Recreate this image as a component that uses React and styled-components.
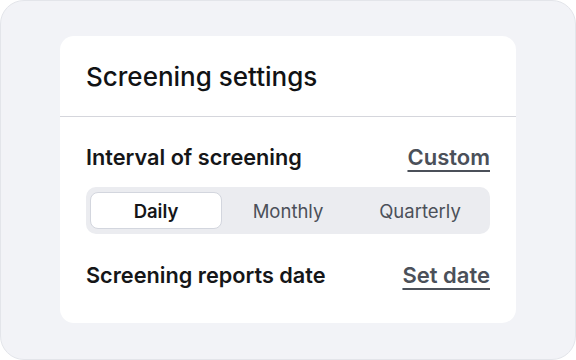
import React, { useState } from "react"
import styled, { createGlobalStyle } from "styled-components"

const GlobalStyle = createGlobalStyle`
  html, body {
    margin: 0;
    padding: 0;
    background: #ffffff;
  }
  body {
    font-family: Inter, "Noto Sans", sans-serif;
    -webkit-font-smoothing: antialiased;
  }
`

const options = ["Daily", "Monthly", "Quarterly"]

const App = () => {
  const [interval, setInterval] = useState("Daily")

  return (
    <>
      <GlobalStyle />
      <Frame>
        <Card>
          <Header>
            <Title>Screening settings</Title>
          </Header>
          <Body>
            <Row>
              <Label>Interval of screening</Label>
              <LinkButton>Custom</LinkButton>
            </Row>
            <Segmented>
              {options.map((opt) => (
                <Segment
                  key={opt}
                  $active={opt === interval}
                  onClick={() => setInterval(opt)}
                >
                  {opt}
                </Segment>
              ))}
            </Segmented>
            <Row $spaced>
              <Label>Screening reports date</Label>
              <LinkButton>Set date</LinkButton>
            </Row>
          </Body>
        </Card>
      </Frame>
    </>
  )
}

export default App

const Frame = styled.div`
  width: 576px;
  height: 360px;
  box-sizing: border-box;
  border: 1px solid #e3e5ea;
  border-radius: 24px;
  background: #f2f3f7;
  padding: 35px 59px 36px;
`

const Card = styled.div`
  background: #ffffff;
  border-radius: 14px;
  height: 100%;
  display: flex;
  flex-direction: column;
`

const Header = styled.div`
  height: 80px;
  display: flex;
  align-items: center;
  padding: 0 26px;
  border-bottom: 1px solid #d5d6dc;
`

const Title = styled.h2`
  margin: 0;
  font-size: 26px;
  font-weight: 500;
  color: #111214;
`

const Body = styled.div`
  padding: 27px 26px 0 26px;
  display: flex;
  flex-direction: column;
`

const Row = styled.div`
  display: flex;
  align-items: center;
  justify-content: space-between;
  height: 26px;
  margin-top: ${(p) => (p.$spaced ? "28px" : "0")};
`

const Label = styled.span`
  font-size: 21.7px;
  font-weight: 600;
  color: #151618;
`

const LinkButton = styled.button`
  border: none;
  background: none;
  padding: 0;
  font-family: inherit;
  font-size: 22px;
  font-weight: 600;
  color: #4b5059;
  text-decoration: underline;
  text-underline-offset: 5px;
  text-decoration-thickness: 2px;
  cursor: pointer;
`

const Segmented = styled.div`
  margin-top: 17px;
  height: 47px;
  box-sizing: border-box;
  padding: 5px 4px;
  border-radius: 10px;
  background: #ebecf0;
  display: grid;
  grid-template-columns: repeat(3, 1fr);
`

const Segment = styled.button`
  border: 1px solid ${(p) => (p.$active ? "#d3d6de" : "transparent")};
  background: ${(p) => (p.$active ? "#ffffff" : "transparent")};
  border-radius: 8px;
  font-family: inherit;
  font-size: 18.5px;
  font-weight: ${(p) => (p.$active ? 600 : 400)};
  color: ${(p) => (p.$active ? "#151618" : "#4b5059")};
  cursor: pointer;
`
